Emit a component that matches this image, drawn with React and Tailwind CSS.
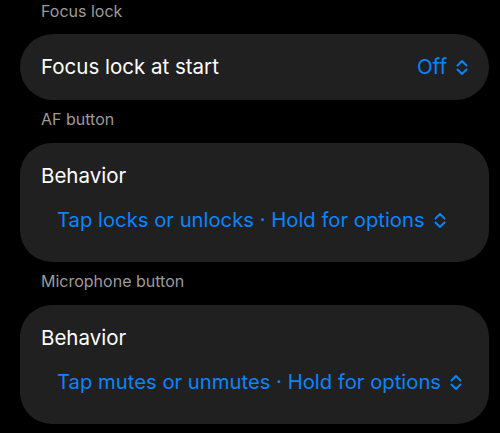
import React from 'react';

const font = { fontFamily: 'Inter, "Noto Sans", sans-serif' };

const UpDown = () => (
  <svg width="12" height="17" viewBox="0 0 12 17" fill="none" className="shrink-0">
    <path d="M1.5 6.5 L6 2 L10.5 6.5" stroke="#0a84ff" strokeWidth="1.9" strokeLinecap="round" strokeLinejoin="round" />
    <path d="M1.5 10.5 L6 15 L10.5 10.5" stroke="#0a84ff" strokeWidth="1.9" strokeLinecap="round" strokeLinejoin="round" />
  </svg>
);

const Header = ({ children, className }) => (
  <div className={`pl-[21px] text-[16px] leading-5 text-[#9b9b9b] ${className}`}>{children}</div>
);

const BehaviorCard = ({ value, className }) => (
  <div className={`rounded-[32px] bg-[#202020] pl-[21px] pr-4 pt-[21px] h-[119px] ${className}`}>
    <div className="text-[20.5px] leading-6 text-white">Behavior</div>
    <div className="mt-5 pl-4 flex items-center gap-[9px] whitespace-nowrap text-[20.25px] leading-6 text-[#0a84ff]">
      <span>{value}</span>
      <UpDown />
    </div>
  </div>
);

export default function App() {
  return (
    <div className="w-[500px] h-[433px] bg-black overflow-hidden pl-5 pr-[11px] pt-[1px]" style={font}>
      <Header>Focus lock</Header>
      <div className="mt-[13px] h-[66px] rounded-full bg-[#202020] pl-[21px] pr-[21px] flex items-center justify-between">
        <span className="text-[20.5px] leading-6 text-white">Focus lock at start</span>
        <div className="flex items-center gap-[9px] text-[20.5px] leading-6 text-[#0a84ff]">
          <span>Off</span>
          <UpDown />
        </div>
      </div>
      <Header className="mt-[9px]">AF button</Header>
      <BehaviorCard className="mt-[14px]" value="Tap locks or unlocks · Hold for options" />
      <Header className="mt-[9px]">Microphone button</Header>
      <BehaviorCard className="mt-[14px]" value="Tap mutes or unmutes · Hold for options" />
    </div>
  );
}
